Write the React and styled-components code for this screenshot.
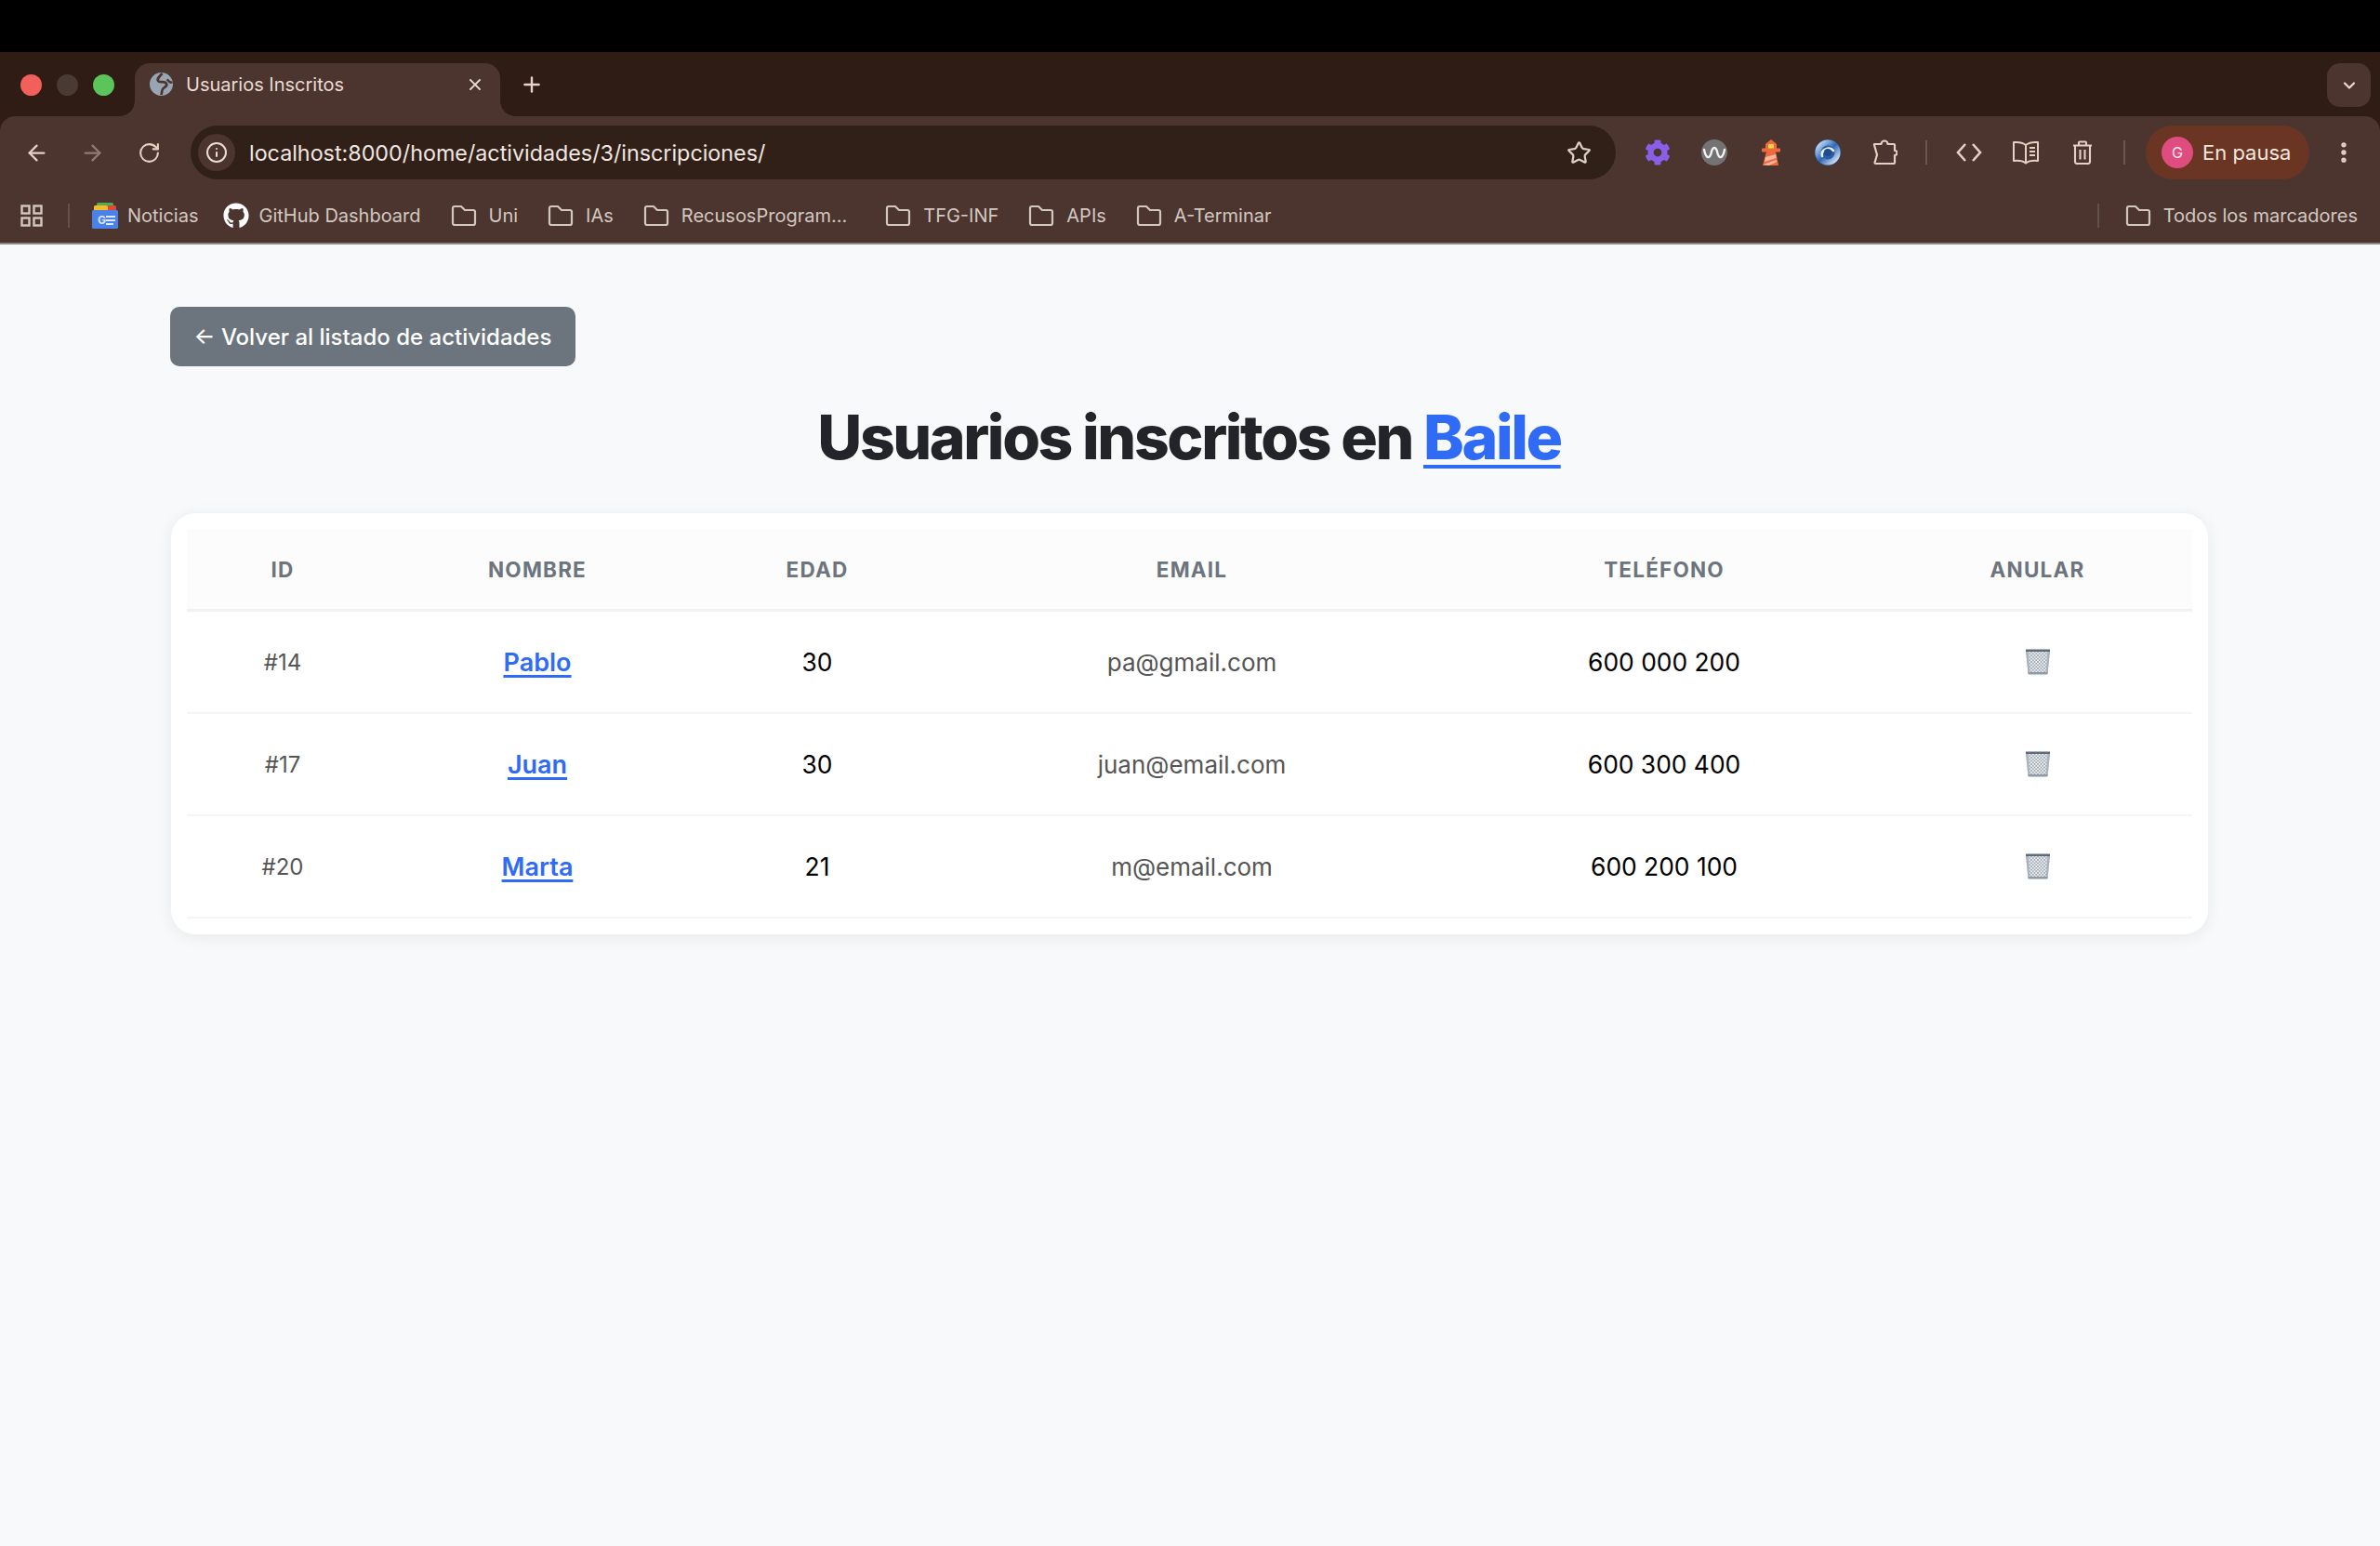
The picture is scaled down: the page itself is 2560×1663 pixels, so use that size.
import styled, { createGlobalStyle } from "styled-components";
import { ArrowLeft, ArrowRight, RotateCw, Info, Star, X, Plus, ChevronDown, EllipsisVertical } from "lucide-react";
import { FaGithub, FaCog } from "react-icons/fa";

const GlobalStyle = createGlobalStyle`
  html, body {
    margin: 0;
    padding: 0;
    background: #f8f9fa;
    font-family: Inter, "Liberation Sans", sans-serif;
  }
  * { box-sizing: border-box; }
`;

const users = [
  { id: "#14", name: "Pablo", age: 30, email: "pa@gmail.com", phone: "600 000 200" },
  { id: "#17", name: "Juan", age: 30, email: "juan@email.com", phone: "600 300 400" },
  { id: "#20", name: "Marta", age: 21, email: "m@email.com", phone: "600 200 100" },
];

const columns = ["ID", "NOMBRE", "EDAD", "EMAIL", "TELÉFONO", "ANULAR"];

const FolderIcon = () => (
  <svg width="28" height="24" viewBox="0 0 28 24" fill="none" stroke="#d3c8c1" strokeWidth="2.2" strokeLinejoin="round">
    <path d="M2 4a2 2 0 0 1 2-2h7l4 4h9a2 2 0 0 1 2 2v12a2 2 0 0 1-2 2H4a2 2 0 0 1-2-2z" />
  </svg>
);

const AppsIcon = () => (
  <svg width="24" height="24" viewBox="0 0 24 24" fill="none" stroke="#d3c8c1" strokeWidth="2.4">
    <rect x="1.5" y="1.5" width="8" height="8" />
    <rect x="14.5" y="1.5" width="8" height="8" />
    <rect x="1.5" y="14.5" width="8" height="8" />
    <rect x="14.5" y="14.5" width="8" height="8" />
  </svg>
);

const GlobeFavicon = () => (
  <svg width="25" height="25" viewBox="0 0 24 24" fill="none">
    <circle cx="12" cy="12" r="12" fill="#98a6b4" />
    <path d="M13 1C9.500 4.500 7 7 9 9c2 2 7-1 8.500 3 .8 3-4 3-4.500 6l-1 5" stroke="#4b352e" strokeWidth="2.6" />
    <path d="M23.500 10c-2.500 1-3.500-.5-5.500-3" stroke="#4b352e" strokeWidth="2.2" />
  </svg>
);

const NewsIcon = () => (
  <svg width="28" height="28" viewBox="0 0 28 28">
    <rect x="5" y="0" width="18" height="8" rx="1.500" fill="#4caf50" />
    <rect x="2" y="3" width="24" height="8" rx="1.500" fill="#e0493a" />
    <rect x="2" y="3" width="15" height="8" rx="1.500" fill="#f5b92c" />
    <rect x="0" y="8" width="28" height="20" rx="1.500" fill="#4a82ea" />
    <text x="6" y="23" fontSize="12" fontWeight="700" fontFamily="Inter, sans-serif" fill="#dbe7fb">G</text>
    <rect x="15" y="14" width="10" height="2" fill="#dbe7fb" />
    <rect x="15" y="18" width="10" height="2" fill="#dbe7fb" />
    <rect x="15" y="22" width="8" height="2" fill="#dbe7fb" />
  </svg>
);

const WaveIcon = () => (
  <svg width="28" height="28" viewBox="0 0 28 28" fill="none">
    <circle cx="14" cy="14" r="14" fill="#737373" />
    <path d="M3 11c2 10 6 10 7.500 4 1-5 2-6 3.500-6s2.500 1 3.500 6c1.500 6 5.500 6 7.500-4" stroke="#f2f2f2" strokeWidth="2.400" strokeLinecap="round" />
  </svg>
);

const LighthouseIcon = () => (
  <svg width="20" height="28" viewBox="0 0 20 28">
    <path d="M10 0l6 5v5H4V5z" fill="#ee6a3c" />
    <rect x="7" y="5" width="6" height="5" fill="#fbd34a" />
    <rect x="0" y="9.500" width="20" height="4" rx="1" fill="#ee6a3c" />
    <path d="M5 13h10l3 15H1z" fill="#ee6a3c" />
    <path d="M4 19l11-3 .8 4L3 24zM1.500 27l14-5 1 2-9 4z" fill="#f6b8a0" />
  </svg>
);

const RingIcon = () => (
  <svg width="28" height="28" viewBox="0 0 28 28" fill="none">
    <defs>
      <linearGradient id="ringFill" x1="0" y1="0" x2="1" y2="1">
        <stop offset="0" stopColor="#cfe2f7" />
        <stop offset="0.5" stopColor="#2f68b4" />
        <stop offset="1" stopColor="#e4eefa" />
      </linearGradient>
    </defs>
    <circle cx="14" cy="14" r="14" fill="#2a5da6" />
    <circle cx="14" cy="14" r="10.500" stroke="url(#ringFill)" strokeWidth="6" />
    <path d="M8 18c-2-7 8-11 12-6" stroke="#e9f2fc" strokeWidth="2.500" strokeLinecap="round" />
    <circle cx="14" cy="14" r="4" fill="#1e4b8f" />
  </svg>
);

const PuzzleIcon = () => (
  <svg width="28" height="28" viewBox="0 0 28 28" fill="none" stroke="#e6cfc3" strokeWidth="2.200" strokeLinejoin="round">
    <path d="M3 5h7.500a3.500 3.500 0 0 1 7 0H24a1 1 0 0 1 1 1v6a2.500 2.500 0 0 1 0 5v8a1 1 0 0 1-1 1H4.500a1 1 0 0 1-1-1l2.500-8.500L3 6z" />
  </svg>
);

const CodeIcon = () => (
  <svg width="28" height="22" viewBox="0 0 28 22" fill="none" stroke="#e6cfc3" strokeWidth="2.600">
    <path d="M10 2l-8 9 8 9M18 2l8 9-8 9" />
  </svg>
);

const BookIcon = () => (
  <svg width="32" height="26" viewBox="0 0 30 26" fill="none" stroke="#e6cfc3" strokeWidth="2" strokeLinejoin="round">
    <path d="M15 5c-3-2.500-7-3.500-13-3v20c5-.5 10 0 13 2.500 3-2.500 8-3 13-2.500V2c-6-.5-10 .5-13 3zM15 5v19.500" />
    <path d="M19 8h6M19 12h6M19 16h6" />
  </svg>
);

const BinIcon = () => (
  <svg width="22" height="26" viewBox="0 0 22 26" fill="none" stroke="#e6cfc3" strokeWidth="2.100">
    <path d="M1 5.500h20M7 5.500V2.500a1 1 0 0 1 1-1h6a1 1 0 0 1 1 1v3M3 5.500V23a2 2 0 0 0 2 2h12a2 2 0 0 0 2-2V5.500M8.500 10v10.500M13.500 10v10.500" />
  </svg>
);

const TrashEmoji = () => (
  <svg width="28" height="28" viewBox="0 0 28 28">
    <defs>
      <pattern id="mesh" width="3.500" height="3.500" patternUnits="userSpaceOnUse">
        <path d="M0 0l3.500 3.500M3.500 0L0 3.500" stroke="#9aa4af" strokeWidth="0.800" />
      </pattern>
    </defs>
    <path d="M1 2h26l-2.500 25h-21z" fill="#f0f2f4" />
    <path d="M1 2h26l-2.500 25h-21z" fill="url(#mesh)" />
    <path d="M1 2h2.500l2 25h-2zM27 2h-2.500l-2 25h2z" fill="#aab3bd" />
    <rect x="1" y="0.500" width="26" height="2.500" fill="#5f6b78" />
    <rect x="3.500" y="25" width="21" height="2.500" rx="1" fill="#8f9aa5" />
  </svg>
);

export default function App() {
  return (
    <>
      <GlobalStyle />
      <TopBlack />
      <Browser>
        <TabStrip>
          <Lights>
            <Light $color="#f1605a" />
            <Light $color="#4a3a34" />
            <Light $color="#5cc55a" />
          </Lights>
          <Tab>
            <GlobeFavicon />
            <TabTitle>Usuarios Inscritos</TabTitle>
            <TabClose>
              <X size={20} strokeWidth={2.2} />
            </TabClose>
          </Tab>
          <NewTab>
            <Plus size={26} strokeWidth={2.2} />
          </NewTab>
          <TabSearch>
            <ChevronDown size={20} strokeWidth={2.6} />
          </TabSearch>
        </TabStrip>
        <Toolbar>
          <NavSlot $width={60}><ArrowLeft size={27} strokeWidth={2} /></NavSlot>
          <NavSlot $width={60} $dim><ArrowRight size={27} strokeWidth={2} /></NavSlot>
          <NavSlot $width={62}><RotateCw size={25} strokeWidth={2} /></NavSlot>
          <UrlBox>
            <InfoBadge>
              <Info size={24} strokeWidth={2} />
            </InfoBadge>
            <UrlText>localhost:8000/home/actividades/3/inscripciones/</UrlText>
            <Star size={27} strokeWidth={2} color="#dccfc8" />
          </UrlBox>
          <ExtensionGroup>
            <NavSlot $width={61}><FaCog size={28} color="#8a5fe8" /></NavSlot>
            <NavSlot $width={61}><WaveIcon /></NavSlot>
            <NavSlot $width={61}><LighthouseIcon /></NavSlot>
            <NavSlot $width={61}><RingIcon /></NavSlot>
            <NavSlot $width={61}><PuzzleIcon /></NavSlot>
          </ExtensionGroup>
          <Divider />
          <NavSlot $width={61}><CodeIcon /></NavSlot>
          <NavSlot $width={61}><BookIcon /></NavSlot>
          <NavSlot $width={61}><BinIcon /></NavSlot>
          <Divider />
          <ProfilePill>
            <Avatar>G</Avatar>
            En pausa
          </ProfilePill>
          <MenuSlot>
            <EllipsisVertical size={28} strokeWidth={2.6} />
          </MenuSlot>
        </Toolbar>
        <Bookmarks>
          <AppsSlot><AppsIcon /></AppsSlot>
          <BookmarkDivider />
          <Bookmark $gap={24} $iconGap={10}><NewsIcon />Noticias</Bookmark>
          <Bookmark $gap={26} $iconGap={11}><GithubMark><FaGithub size={28} /></GithubMark>GitHub Dashboard</Bookmark>
          <Bookmark><FolderIcon />Uni</Bookmark>
          <Bookmark><FolderIcon />IAs</Bookmark>
          <Bookmark><FolderIcon />RecusosProgram...</Bookmark>
          <Bookmark $gap={41}><FolderIcon />TFG-INF</Bookmark>
          <Bookmark><FolderIcon />APIs</Bookmark>
          <Bookmark><FolderIcon />A-Terminar</Bookmark>
          <AllBookmarks>
            <BookmarkDivider />
            <Bookmark $gap={28}><FolderIcon />Todos los marcadores</Bookmark>
          </AllBookmarks>
        </Bookmarks>
      </Browser>
      <Page>
        <BackButton href="#">← Volver al listado de actividades</BackButton>
        <Title>
          Usuarios inscritos en <TitleLink href="#">Baile</TitleLink>
        </Title>
        <Card>
          <HeadRow>
            {columns.map((col) => (
              <HeadCell key={col}>{col}</HeadCell>
            ))}
          </HeadRow>
          {users.map((user) => (
            <Row key={user.id}>
              <IdCell>{user.id}</IdCell>
              <Cell><NameLink href="#">{user.name}</NameLink></Cell>
              <Cell>{user.age}</Cell>
              <Cell $muted>{user.email}</Cell>
              <Cell>{user.phone}</Cell>
              <Cell><TrashEmoji /></Cell>
            </Row>
          ))}
        </Card>
      </Page>
    </>
  );
}

const TopBlack = styled.div`
  height: 56px;
  background: #000;
`;

const Browser = styled.header`
  background: #2e1c15;
  border-bottom: 2px solid #8f8683;
`;

const TabStrip = styled.div`
  height: 69px;
  padding-top: 12px;
  display: flex;
  align-items: stretch;
`;

const Lights = styled.div`
  width: 145px;
  padding: 0 0 11px 22px;
  display: flex;
  align-items: center;
  gap: 16px;
`;

const Light = styled.span`
  width: 23px;
  height: 23px;
  border-radius: 50%;
  background: ${(p) => p.$color};
`;

const Tab = styled.div`
  position: relative;
  width: 393px;
  padding: 0 16px;
  background: #4b352e;
  border-radius: 16px 16px 0 0;
  display: flex;
  align-items: center;
  padding-bottom: 12px;
  color: #eadcd4;

  &::before,
  &::after {
    content: "";
    position: absolute;
    bottom: 0;
    width: 16px;
    height: 16px;
  }
  &::before {
    left: -16px;
    background: radial-gradient(circle at 0 0, transparent 15.5px, #4b352e 16px);
  }
  &::after {
    right: -16px;
    background: radial-gradient(circle at 100% 0, transparent 15.5px, #4b352e 16px);
  }
`;

const TabTitle = styled.span`
  margin-left: 14px;
  font-size: 20px;
  flex: 1;
`;

const TabClose = styled.span`
  display: flex;
  margin-right: 1px;
`;

const NewTab = styled.span`
  width: 68px;
  padding-bottom: 12px;
  display: flex;
  align-items: center;
  justify-content: center;
  color: #e9d3c8;
`;

const TabSearch = styled.span`
  margin-left: auto;
  margin-right: 10px;
  width: 47px;
  height: 47px;
  border-radius: 14px;
  background: #4b352e;
  color: #eadcd4;
  display: flex;
  align-items: center;
  justify-content: center;
`;

const Toolbar = styled.div`
  height: 68px;
  padding: 10px 0 0 9px;
  background: #4b352e;
  border-radius: 16px 16px 0 0;
  display: flex;
  align-items: flex-start;
  color: #e6cfc3;
`;

const NavSlot = styled.span`
  flex: none;
  width: ${(p) => p.$width}px;
  height: 58px;
  display: flex;
  align-items: center;
  justify-content: center;
  opacity: ${(p) => (p.$dim ? 0.45 : 1)};
`;

const UrlBox = styled.div`
  flex: none;
  width: 1533px;
  height: 58px;
  margin-left: 14px;
  padding: 0 26px 0 8px;
  background: #312018;
  border-radius: 29px;
  display: flex;
  align-items: center;
`;

const InfoBadge = styled.span`
  width: 40px;
  height: 40px;
  border-radius: 50%;
  background: #4b352e;
  display: flex;
  align-items: center;
  justify-content: center;
  color: #eadcd4;
`;

const UrlText = styled.span`
  flex: 1;
  margin-left: 15px;
  color: #f0e6e1;
  font-size: 23.3px;
`;

const ExtensionGroup = styled.div`
  margin-left: 14px;
  display: flex;
`;

const Divider = styled.span`
  flex: none;
  width: 2px;
  height: 26px;
  margin: 16px 14px 0;
  background: #6a5850;
`;

const ProfilePill = styled.div`
  flex: none;
  width: 176px;
  height: 58px;
  margin-left: 8px;
  padding-left: 17px;
  border-radius: 29px;
  background: #6a3523;
  color: #f2e6df;
  font-size: 22px;
  display: flex;
  align-items: center;
  gap: 10px;
`;

const Avatar = styled.span`
  width: 34px;
  height: 34px;
  border-radius: 50%;
  background: #df4c7f;
  color: #f9e6ee;
  font-size: 16px;
  display: flex;
  align-items: center;
  justify-content: center;
`;

const MenuSlot = styled.span`
  flex: none;
  width: 74px;
  height: 58px;
  display: flex;
  align-items: center;
  justify-content: center;
`;

const Bookmarks = styled.nav`
  height: 68px;
  padding-top: 10px;
  background: #4b352e;
  display: flex;
  align-items: center;
  color: #d3c8c1;
  font-size: 20px;
`;

const AppsSlot = styled.span`
  width: 73px;
  padding-left: 22px;
  display: flex;
`;

const BookmarkDivider = styled.span`
  width: 2px;
  height: 26px;
  background: #62504a;
`;

const Bookmark = styled.span`
  margin-left: ${(p) => p.$gap ?? 32}px;
  display: flex;
  align-items: center;
  gap: ${(p) => p.$iconGap ?? 13}px;
  white-space: nowrap;
`;

const GithubMark = styled.span`
  display: flex;
  color: #fff;
`;

const AllBookmarks = styled.div`
  margin-left: auto;
  padding-right: 24px;
  display: flex;
  align-items: center;
`;

const Page = styled.main`
  padding: 67px 185px 0 183px;
  min-height: 1399px;
  background: #f8f9fa;
`;

const BackButton = styled.a`
  display: inline-flex;
  align-items: center;
  height: 64px;
  width: 436px;
  justify-content: center;
  background: #6c757d;
  border-radius: 10px;
  color: #fff;
  font-size: 24px;
  font-weight: 500;
  text-decoration: none;
`;

const Title = styled.h1`
  margin: 37px 0 43px;
  text-align: center;
  color: #212529;
  font-size: 66px;
  line-height: 78px;
  font-weight: 800;
  letter-spacing: -2.4px;
`;

const TitleLink = styled.a`
  color: #2f6bf5;
  text-decoration-thickness: 4px;
  text-underline-offset: 6px;
`;

const Card = styled.section`
  margin-left: 1px;
  background: #fff;
  border-radius: 26px;
  padding: 17px;
  box-shadow: 0 0 0 1px #f1f2f4, 0 3px 16px rgba(30, 40, 60, 0.08);
`;

const gridColumns = "206px 342px 260px 546px 470px 1fr";

const HeadRow = styled.div`
  display: grid;
  grid-template-columns: ${gridColumns};
  height: 89px;
  background: #fcfcfd;
  border-bottom: 3px solid #eff1f4;
`;

const HeadCell = styled.div`
  display: flex;
  align-items: center;
  justify-content: center;
  color: #6c757d;
  font-size: 22.5px;
  font-weight: 700;
  letter-spacing: 1.2px;
`;

const Row = styled.div`
  display: grid;
  grid-template-columns: ${gridColumns};
  height: 110px;
  border-bottom: 2px solid #f4f5f7;
`;

const Cell = styled.div`
  display: flex;
  align-items: center;
  justify-content: center;
  color: ${(p) => (p.$muted ? "#555" : "#000")};
  font-size: ${(p) => (p.$muted ? 26 : 26.4)}px;
`;

const IdCell = styled(Cell)`
  color: #555;
  font-size: 24px;
`;

const NameLink = styled.a`
  color: #2f6bf5;
  font-size: 27px;
  font-weight: 600;
  text-decoration-thickness: 2.500px;
  text-underline-offset: 4px;
`;
